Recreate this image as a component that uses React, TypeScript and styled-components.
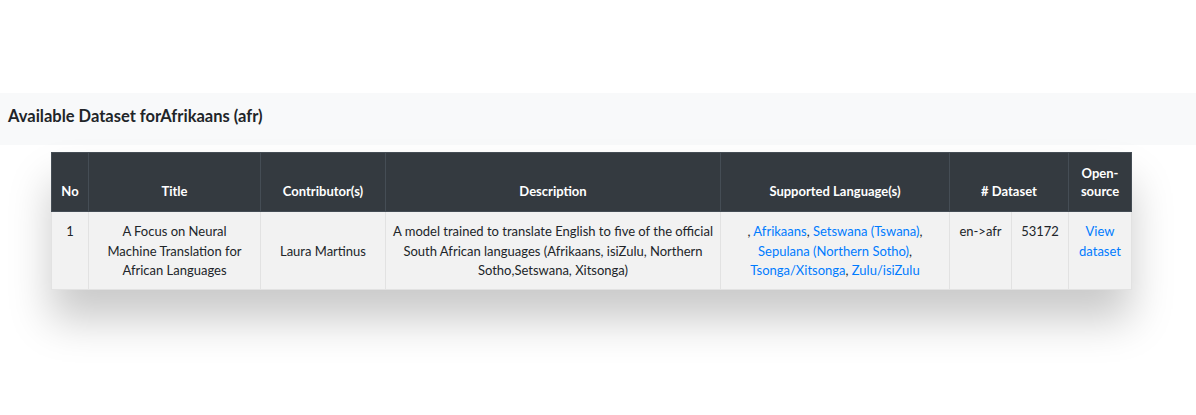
import React from "react";
import styled, { createGlobalStyle } from "styled-components";

const Global = createGlobalStyle`
  html, body { margin: 0; padding: 0; background: #fff; }
  body { font-family: Lato, "Open Sans", "Liberation Sans", sans-serif; color: #212529; }
`;

const Page = styled.div`
  padding: 93px 0 126px;
`;

const Band = styled.div`
  background: #f8f9fa;
  height: 52px;
  box-sizing: border-box;
  display: flex;
  align-items: center;
  padding: 0 8px 6px;
`;

const Heading = styled.h2`
  margin: 0;
  font-size: 16.5px;
  font-weight: 700;
  color: #212529;
`;

const TableWrap = styled.div`
  padding: 7px 0 0 51px;
`;

const Card = styled.div`
  width: 1080px;
  box-shadow: 0 30px 40px rgba(0, 0, 0, 0.21);
`;

const Table = styled.table`
  width: 1080px;
  table-layout: fixed;
  border-collapse: collapse;
  font-size: 13px;
  line-height: 19.5px;
`;

const Th = styled.th`
  background: #343a40;
  color: #fff;
  font-weight: 700;
  text-align: center;
  vertical-align: bottom;
  line-height: 18px;
  padding: 11px 4px 11px;
  border: 1px solid #454d55;
`;

const Td = styled.td<{ $middle?: boolean; $tight?: boolean }>`
  background: #f2f2f2;
  text-align: center;
  vertical-align: ${(p) => (p.$middle ? "middle" : "top")};
  padding: 10px ${(p) => (p.$tight ? "3px" : "10px")} 8px;
  border: 1px solid #e2e2e2;
  color: #212529;
`;

const Link = styled.a`
  color: #007bff;
  text-decoration: none;
`;

const widths = [37, 172, 125, 335, 229, 62, 57, 63];

export default function App() {
  return (
    <>
      <Global />
      <Page>
        <Band>
          <Heading>Available Dataset forAfrikaans (afr)</Heading>
        </Band>
        <TableWrap>
          <Card>
            <Table>
              <colgroup>
                {widths.map((w, i) => (
                  <col key={i} style={{ width: w }} />
                ))}
              </colgroup>
              <thead>
                <tr>
                  <Th>No</Th>
                  <Th>Title</Th>
                  <Th>Contributor(s)</Th>
                  <Th>Description</Th>
                  <Th>Supported Language(s)</Th>
                  <Th colSpan={2}># Dataset</Th>
                  <Th>Open-source</Th>
                </tr>
              </thead>
              <tbody>
                <tr>
                  <Td>1</Td>
                  <Td>A Focus on Neural Machine Translation for African Languages</Td>
                  <Td $middle>Laura Martinus</Td>
                  <Td $tight>
                    A model trained to translate English to five of the official South African languages
                    (Afrikaans, isiZulu, Northern Sotho,Setswana, Xitsonga)
                  </Td>
                  <Td $tight>
                    , <Link href="#">Afrikaans</Link>, <Link href="#">Setswana (Tswana)</Link>,{" "}
                    <Link href="#">Sepulana (Northern Sotho)</Link>, <Link href="#">Tsonga/Xitsonga</Link>,{" "}
                    <Link href="#">Zulu/isiZulu</Link>
                  </Td>
                  <Td $tight>en-&gt;afr</Td>
                  <Td $tight>53172</Td>
                  <Td $tight>
                    <Link href="#">View dataset</Link>
                  </Td>
                </tr>
              </tbody>
            </Table>
          </Card>
        </TableWrap>
      </Page>
    </>
  );
}
